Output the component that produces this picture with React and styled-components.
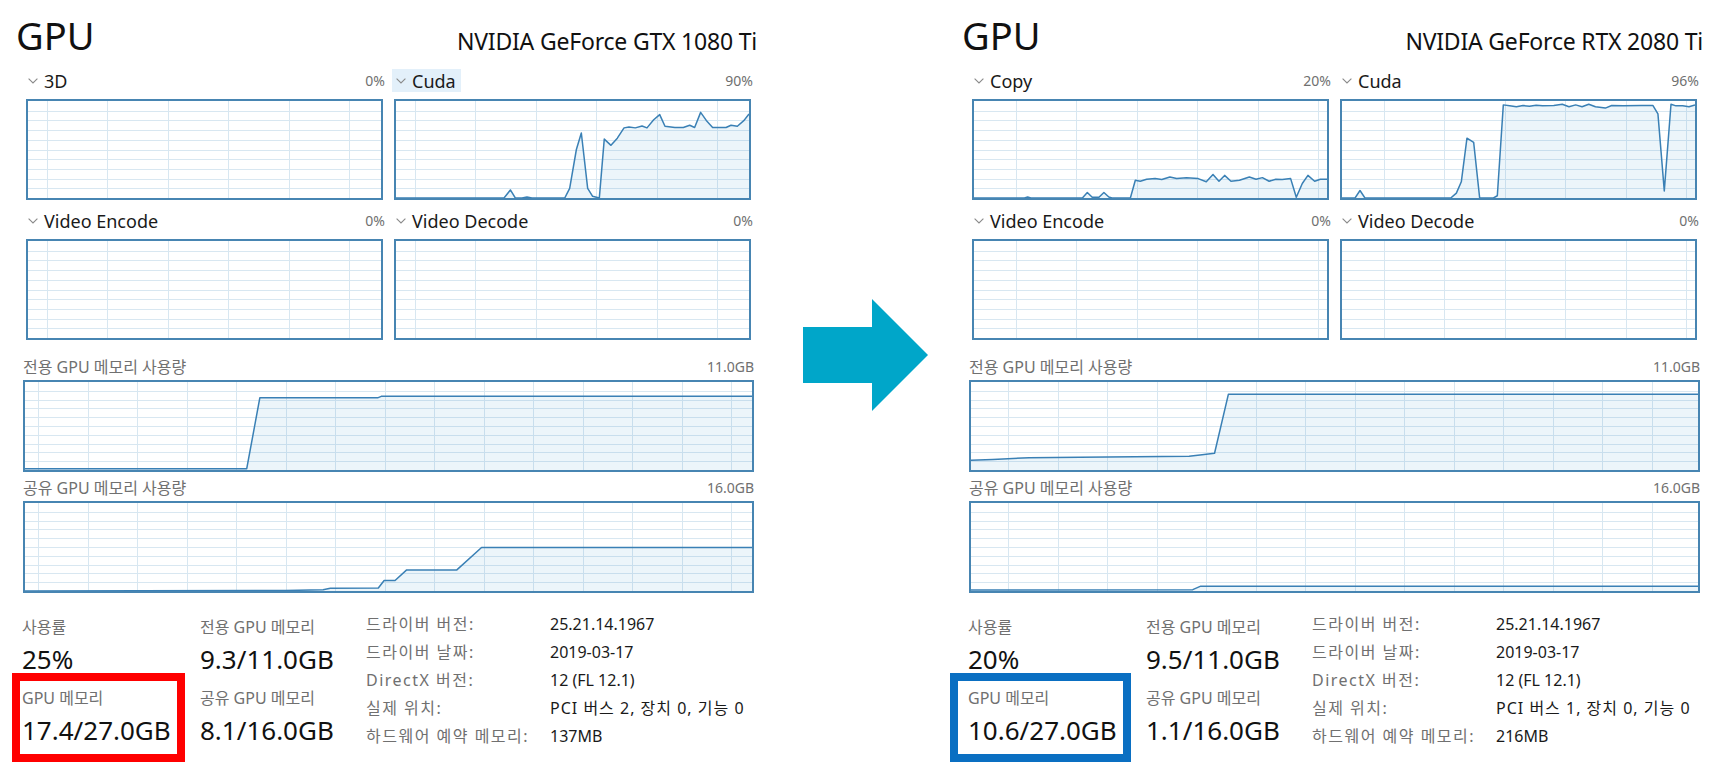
import React from 'react';
import styled, { createGlobalStyle } from 'styled-components';

const GlobalStyle = createGlobalStyle`
  html, body {
    margin: 0;
    padding: 0;
    background: #ffffff;
  }
  body {
    font-family: "Noto Sans", "Noto Sans CJK KR", sans-serif;
    color: #1a1a1a;
  }
`;

const LINE = '#3a80b5';
const GRID = '#d8e7f1';

const panels = [
  {
    model: 'NVIDIA GeForce GTX 1080 Ti',
    engineOffset: 19,
    memOffset: 13,
    engines: [
      { name: '3D', value: '0%', data: [] },
      {
        name: 'Cuda',
        value: '90%',
        active: true,
        data: [
          [0, 0], [30.6, 0], [32.4, 8.3], [33.8, 0], [35.7, 0], [37.1, 1], [38.5, 0], [47.8, 0],
          [49.2, 10], [51.1, 50], [52.5, 67], [54.3, 10], [55.7, 1.7], [57.6, 0], [59, 60.7],
          [60.9, 54.3], [62.7, 61.7], [64.6, 72.3], [66, 73.3], [67.8, 72.3], [69.7, 74.3],
          [71.1, 72.3], [73, 80.7], [74.7, 86], [76.2, 74], [79, 72.7], [81.4, 72.7], [83.2, 75],
          [84.6, 72.7], [86.3, 88.3], [87.9, 80], [89.7, 72.7], [93.5, 72.7], [94.9, 75],
          [96.7, 74], [98.6, 80], [100, 86.7],
        ],
      },
      { name: 'Video Encode', value: '0%', data: [] },
      { name: 'Video Decode', value: '0%', data: [] },
    ],
    dedicated: [[0, 1.5], [30.5, 1.5], [32.3, 82], [48.5, 82], [49, 83.7], [100, 83.7]],
    shared: [
      [0, 0], [35.8, 0.5], [41, 1.5], [42, 3], [48.6, 3.5], [49.4, 12], [50.9, 12], [52.5, 24],
      [59.4, 24], [62.8, 49.5], [100, 49.5],
    ],
    usage: '25%',
    gpuMem: '17.4/27.0GB',
    dedicatedMem: '9.3/11.0GB',
    sharedMem: '8.1/16.0GB',
    frame: '#ff0000',
    frameLeft: 0,
    location: 'PCI 버스 2, 장치 0, 기능 0',
    reserved: '137MB',
  },
  {
    model: 'NVIDIA GeForce RTX 2080 Ti',
    engineOffset: 42,
    memOffset: 37,
    engines: [
      {
        name: 'Copy',
        value: '20%',
        data: [
          [0, 0], [14.3, 0], [15.2, 1], [16.1, 0], [30.7, 0], [32.1, 5.7], [33.5, 0.7], [35.4, 0.7],
          [36.8, 5.7], [38.2, 1], [39.1, 0], [44.3, 0], [45.7, 18.3], [47.1, 17.3], [48.9, 19.3],
          [51.3, 20], [53.2, 19], [55.5, 21.7], [57.4, 20], [60.2, 21], [63.5, 20], [65.8, 16.7],
          [67.7, 24.3], [69.4, 17.3], [71, 23.3], [72.8, 17.3], [75.2, 18.3], [78, 21.7],
          [79.9, 19.3], [81.7, 21], [83.6, 17.3], [85.5, 19.3], [87.3, 19], [89.7, 20], [91.3, 0.7],
          [93, 15], [94.6, 23.3], [96.5, 17.3], [98.1, 19.3], [100, 19.3],
        ],
      },
      {
        name: 'Cuda',
        value: '96%',
        data: [
          [0, 0], [3.7, 0], [5.1, 7.7], [6.5, 0], [30.8, 0], [32.4, 5], [33.8, 16.7], [35.4, 61.7],
          [37.3, 57.3], [39, 0], [42.9, 0], [44, 2.3], [45.7, 96], [47.5, 95], [49.4, 94],
          [51.3, 95.3], [53.1, 94.7], [55, 95.7], [56.8, 95], [60, 95.3], [62.4, 96.7], [64.3, 94],
          [66.2, 96], [68, 94], [69.9, 96.7], [71.8, 94], [74.6, 92.7], [76.4, 95.3], [79.7, 95],
          [84.8, 95.3], [88.1, 95.3], [89.5, 86.7], [91.3, 7.3], [93.2, 96.7], [94.6, 95],
          [96.5, 95], [98.3, 94], [100, 96],
        ],
      },
      { name: 'Video Encode', value: '0%', data: [] },
      { name: 'Video Decode', value: '0%', data: [] },
    ],
    dedicated: [
      [0, 11], [3, 12], [8, 14], [15, 14.5], [30, 15.5], [31.5, 17], [33.5, 19], [35.4, 86], [100, 86],
    ],
    shared: [[0, 1], [30.5, 1.5], [31.6, 5.5], [100, 5.5]],
    usage: '20%',
    gpuMem: '10.6/27.0GB',
    dedicatedMem: '9.5/11.0GB',
    sharedMem: '1.1/16.0GB',
    frame: '#0a6fc2',
    frameLeft: 8,
    location: 'PCI 버스 1, 장치 0, 기능 0',
    reserved: '216MB',
  },
];

const Chart = ({ width, height, step, offset, data }) => {
  const w = width - 4;
  const h = height - 4;
  const vlines = [];
  for (let x = offset; x < w; x += step) vlines.push(Math.round(x) + 0.5);
  const hlines = Array.from({ length: 9 }, (_, i) => Math.round((h * (i + 1)) / 10) + 0.5);
  const pts = data.map(([x, y]) => [(x / 100) * w, h - (y / 100) * h]);
  const line = pts.map((p) => p.join(',')).join(' ');
  const area = pts.length
    ? `M ${pts[0][0]} ${h} ` + pts.map(([x, y]) => `L ${x} ${y}`).join(' ') + ` L ${w} ${h} Z`
    : '';

  return (
    <ChartBox $w={width} $h={height}>
      <svg width={w} height={h} viewBox={`0 0 ${w} ${h}`}>
        <g stroke={GRID} strokeWidth="1" shapeRendering="crispEdges">
          {vlines.map((x) => (
            <line key={'v' + x} x1={x} y1={0} x2={x} y2={h} />
          ))}
          {hlines.map((y) => (
            <line key={'h' + y} x1={0} y1={y} x2={w} y2={y} />
          ))}
        </g>
        {pts.length > 0 && (
          <>
            <path d={area} fill="rgba(17, 125, 187, 0.08)" />
            <polyline points={line} fill="none" stroke={LINE} strokeWidth="1.5" strokeLinejoin="round" />
          </>
        )}
      </svg>
    </ChartBox>
  );
};

const Chevron = () => (
  <svg width="10" height="6" viewBox="0 0 10 6">
    <path d="M0.6 0.6 L5 5 L9.4 0.6" fill="none" stroke="#8a8a8a" strokeWidth="1.1" />
  </svg>
);

const Arrow = () => (
  <svg width="125" height="112" viewBox="0 0 125 112">
    <polygon points="0,28 69,28 69,0 125,56 69,112 69,84 0,84" fill="#00a6c9" />
  </svg>
);

const GpuPanel = ({ panel }) => (
  <Panel>
    <TitleRow>
      <Title>GPU</Title>
      <Model>{panel.model}</Model>
    </TitleRow>

    <EngineGrid>
      {panel.engines.map((engine) => (
        <EngineCell key={engine.name}>
          <EngineHeader>
            <EngineName $active={engine.active}>
              <Chevron />
              {engine.name}
            </EngineName>
            <Percent>{engine.value}</Percent>
          </EngineHeader>
          <ChartWrap>
            <Chart width={357} height={101} step={60.4} offset={panel.engineOffset} data={engine.data} />
          </ChartWrap>
        </EngineCell>
      ))}
    </EngineGrid>

    <MemorySection>
      <MemLabelRow $top={15}>
        <MemLabel>전용 GPU 메모리 사용량</MemLabel>
        <Percent>11.0GB</Percent>
      </MemLabelRow>
      <Chart width={731} height={92} step={49.5} offset={panel.memOffset} data={panel.dedicated} />
      <MemLabelRow $top={4}>
        <MemLabel>공유 GPU 메모리 사용량</MemLabel>
        <Percent>16.0GB</Percent>
      </MemLabelRow>
      <Chart width={731} height={92} step={49.5} offset={panel.memOffset} data={panel.shared} />
    </MemorySection>

    <Stats>
      <StatColumn $w={157} $gap={21}>
        <StatCell>
          <StatLabel>사용률</StatLabel>
          <StatValue>{panel.usage}</StatValue>
        </StatCell>
        <StatCell $frame={panel.frame} $frameLeft={panel.frameLeft}>
          <StatLabel>GPU 메모리</StatLabel>
          <StatValue>{panel.gpuMem}</StatValue>
        </StatCell>
      </StatColumn>
      <StatColumn $w={168} $gap={0}>
        <StatCell>
          <StatLabel>전용 GPU 메모리</StatLabel>
          <StatValue>{panel.dedicatedMem}</StatValue>
        </StatCell>
        <StatCell>
          <StatLabel>공유 GPU 메모리</StatLabel>
          <StatValue>{panel.sharedMem}</StatValue>
        </StatCell>
      </StatColumn>
      <InfoTable>
        <InfoLabel>드라이버 버전:</InfoLabel>
        <InfoValue>25.21.14.1967</InfoValue>
        <InfoLabel>드라이버 날짜:</InfoLabel>
        <InfoValue>2019-03-17</InfoValue>
        <InfoLabel>DirectX 버전:</InfoLabel>
        <InfoValue>12 (FL 12.1)</InfoValue>
        <InfoLabel>실제 위치:</InfoLabel>
        <InfoValue $spacing={1}>{panel.location}</InfoValue>
        <InfoLabel>하드웨어 예약 메모리:</InfoLabel>
        <InfoValue>{panel.reserved}</InfoValue>
      </InfoTable>
    </Stats>
  </Panel>
);

const App = () => (
  <>
    <GlobalStyle />
    <Page>
      <GpuPanel panel={panels[0]} />
      <ArrowColumn>
        <Arrow />
      </ArrowColumn>
      <GpuPanel panel={panels[1]} />
    </Page>
  </>
);

export default App;

// Styled Components
const Page = styled.div`
  display: flex;
  width: 1734px;
  height: 762px;
  overflow: hidden;
  background: #ffffff;
`;

const Panel = styled.div`
  width: 757px;
  flex-shrink: 0;
`;

const ArrowColumn = styled.div`
  width: 189px;
  flex-shrink: 0;
  box-sizing: border-box;
  padding: 299px 0 0 46px;
`;

const TitleRow = styled.div`
  display: flex;
  align-items: baseline;
  justify-content: space-between;
  height: 69px;
  box-sizing: border-box;
  padding: 10px 0 0 16px;
`;

const Title = styled.div`
  font-size: 38px;
  line-height: 50px;
  color: #111111;
`;

const Model = styled.div`
  font-size: 23px;
  letter-spacing: -0.2px;
  color: #111111;
`;

const EngineGrid = styled.div`
  display: grid;
  grid-template-columns: 361px 361px;
  column-gap: 7px;
  row-gap: 9px;
  margin-left: 24px;
`;

const EngineCell = styled.div`
  display: flex;
  flex-direction: column;
`;

const EngineHeader = styled.div`
  display: flex;
  align-items: center;
  justify-content: space-between;
  height: 23px;
  margin-bottom: 7px;
`;

const EngineName = styled.div`
  display: flex;
  align-items: center;
  gap: 6px;
  height: 23px;
  padding: 0 5px 0 4px;
  background: ${(p) => (p.$active ? '#e3f0fa' : 'transparent')};
  font-size: 18px;
  color: #1a1a1a;
`;

const Percent = styled.div`
  font-size: 14px;
  color: #707070;
`;

const ChartWrap = styled.div`
  padding: 0 2px;
`;

const ChartBox = styled.div`
  width: ${(p) => p.$w}px;
  height: ${(p) => p.$h}px;
  box-sizing: border-box;
  border: 2px solid #4785b2;
  background: #ffffff;

  svg {
    display: block;
  }
`;

const MemorySection = styled.div`
  margin-left: 23px;
  width: 731px;
`;

const MemLabelRow = styled.div`
  display: flex;
  align-items: center;
  justify-content: space-between;
  height: 22px;
  margin: ${(p) => p.$top}px 0 3px;
`;

const MemLabel = styled.div`
  font-size: 16px;
  color: #707070;
`;

const Stats = styled.div`
  display: flex;
  margin: 17px 0 0 20px;
`;

const StatColumn = styled.div`
  display: flex;
  flex-direction: column;
  width: ${(p) => p.$w}px;
  margin-right: ${(p) => p.$gap}px;
  flex-shrink: 0;
`;

const StatCell = styled.div`
  position: relative;
  display: flex;
  flex-direction: column;
  gap: 4px;
  padding: 6px 0 5px 2px;

  &::after {
    content: '';
    display: ${(p) => (p.$frame ? 'block' : 'none')};
    position: absolute;
    top: -8px;
    right: -8px;
    bottom: -10px;
    left: ${(p) => -8 - (p.$frameLeft || 0)}px;
    border: 8px solid ${(p) => p.$frame || 'transparent'};
    pointer-events: none;
  }
`;

const StatLabel = styled.div`
  font-size: 16px;
  line-height: 22px;
  color: #707070;
`;

const StatValue = styled.div`
  font-size: 26px;
  line-height: 34px;
  color: #111111;
  white-space: nowrap;
`;

const InfoTable = styled.div`
  display: grid;
  grid-template-columns: 184px auto;
  margin-top: 2px;
  font-size: 16px;
  line-height: 25.5px;
  white-space: nowrap;
`;

const InfoLabel = styled.div`
  color: #707070;
  letter-spacing: 1.5px;
`;

const InfoValue = styled.div`
  color: #1a1a1a;
  letter-spacing: ${(p) => p.$spacing || 0}px;
`;
